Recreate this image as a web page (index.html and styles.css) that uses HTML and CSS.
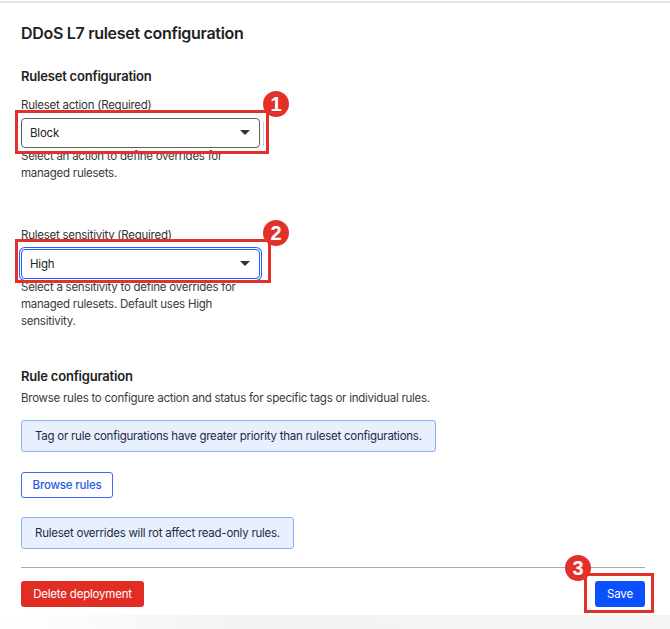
FILE: index.html
```html
<!DOCTYPE html>
<html lang="en">

<head>
    <meta charset="UTF-8" />
    <meta name="viewport" content="width=device-width, initial-scale=1" />
    <title>DDoS L7 ruleset configuration</title>
    <link rel="stylesheet" href="styles.css">
</head>

<body>
    <div class="panel">
        <h1 class="title">DDoS L7 ruleset configuration</h1>

        <h2 class="section-title">Ruleset configuration</h2>

        <div class="field">
            <label class="field-label">Ruleset action (Required)</label>
            <div class="select-wrap">
                <div class="select">
                    <span>Block</span>
                    <svg class="caret" width="10" height="6" viewBox="0 0 10 6"><path d="M0 0h10L5 5z" /></svg>
                </div>
                <span class="scroll-hint"></span>
                <span class="mark mark-1"></span>
                <span class="badge badge-1">1</span>
            </div>
            <p class="help">Select an action to define overrides for<br>managed rulesets.</p>
        </div>

        <div class="field field-second">
            <label class="field-label">Ruleset sensitivity (Required)</label>
            <div class="select-wrap">
                <div class="select is-focused">
                    <span>High</span>
                    <svg class="caret" width="10" height="6" viewBox="0 0 10 6"><path d="M0 0h10L5 5z" /></svg>
                </div>
                <span class="mark mark-2"></span>
                <span class="badge badge-2">2</span>
            </div>
            <p class="help">Select a sensitivity to define overrides for<br>managed rulesets. Default uses High<br>sensitivity.</p>
        </div>

        <h2 class="section-title rule-title">Rule configuration</h2>
        <p class="desc">Browse rules to configure action and status for specific tags or individual rules.</p>

        <div class="notice">Tag or rule configurations have greater priority than ruleset configurations.</div>

        <button class="btn btn-outline">Browse rules</button>

        <div class="notice">Ruleset overrides will rot affect read-only rules.</div>

        <div class="footer">
            <button class="btn btn-danger">Delete deployment</button>
            <div class="save-wrap">
                <button class="btn btn-primary">Save</button>
                <span class="mark mark-3"></span>
                <span class="badge badge-3">3</span>
            </div>
        </div>
    </div>
    <div class="bottom-fade"></div>
</body>

</html>
```

FILE: styles.css
```css
html,
body {
    margin: 0;
    background: #fff;
}

body {
    font-family: Inter, "Noto Sans", sans-serif;
    color: #2b2b2b;
    padding-top: 1px;
}

.panel {
    border-top: 2px solid #e4e4e4;
    padding: 0 25px 8px 21px;
}

.title {
    font-size: 16px;
    line-height: 24px;
    font-weight: 600;
    letter-spacing: -0.3px;
    margin: 18px 0 0;
    color: #222;
}

.section-title {
    font-size: 13px;
    line-height: 20px;
    font-weight: 600;
    letter-spacing: -0.2px;
    margin: 21px 0 0;
    color: #222;
}

.field {
    margin-top: 11px;
    width: 240px;
}

.field-second {
    margin-top: 45px;
}

.field-label {
    display: block;
    font-size: 11.5px;
    letter-spacing: -0.25px;
    line-height: 16px;
    color: #333;
    margin-bottom: 5px;
}

.field-second .field-label {
    margin-bottom: 6px;
}

/* dropdown */
.select-wrap {
    position: relative;
    width: 239px;
}

.select {
    box-sizing: border-box;
    height: 30px;
    border: 1px solid #5f5f5f;
    border-radius: 4px;
    display: flex;
    align-items: center;
    justify-content: space-between;
    padding: 0 9px 0 8px;
    font-size: 11.5px;
    letter-spacing: -0.2px;
    color: #222;
    background: #fff;
}

.select.is-focused {
    border-color: #1f5cff;
    box-shadow: 0 0 0 1px #fff, 0 0 0 2px #1f5cff;
}

.caret {
    fill: #333;
}

.scroll-hint {
    position: absolute;
    left: 242px;
    top: 3px;
    width: 1px;
    height: 25px;
    background: #c9d3e6;
}

.help {
    margin: 0;
    font-size: 11.5px;
    letter-spacing: -0.25px;
    line-height: 17px;
    color: #3a3a3a;
}

.rule-title {
    margin-top: 36px;
}

.desc {
    margin: 4px 0 0;
    font-size: 11.5px;
    letter-spacing: -0.25px;
    line-height: 16px;
    color: #3a3a3a;
}

/* info boxes */
.notice {
    display: inline-block;
    box-sizing: border-box;
    margin-top: 14px;
    padding: 7px 13px;
    background: #e8f0fd;
    border: 1px solid #8cb0f3;
    border-radius: 3px;
    font-size: 11.5px;
    letter-spacing: -0.25px;
    line-height: 16px;
    color: #1d2a47;
}

.btn {
    font-family: inherit;
    font-size: 11.5px;
    letter-spacing: -0.2px;
    line-height: 16px;
    border-radius: 3px;
    cursor: pointer;
    height: 26px;
    padding: 0 12px;
    white-space: nowrap;
}

.btn-outline {
    display: block;
    width: 92px;
    padding: 0;
    margin: 20px 0 19px;
    background: #fff;
    color: #1f5ae8;
    border: 1px solid #3a6cf0;
    font-weight: 500;
}

.notice + .btn-outline + .notice {
    margin-top: 0;
}

.footer {
    margin-top: 18px;
    border-top: 1px solid #a9a9a9;
    padding-top: 13px;
    display: flex;
    justify-content: space-between;
    align-items: flex-start;
}

.btn-danger {
    background: #e22d25;
    color: #fff;
    border: none;
    width: 123px;
    padding: 0;
}

.btn-primary {
    background: #0b50ff;
    color: #fff;
    border: none;
    width: 50px;
    padding: 0;
}

.save-wrap {
    position: relative;
}

/* red callouts */
.mark {
    position: absolute;
    border: 3px solid #e3302b;
    pointer-events: none;
}

.mark-1 {
    left: -6px;
    top: -8px;
    right: -9px;
    bottom: -6px;
}

.mark-2 {
    left: -6px;
    top: -10px;
    right: -11px;
    bottom: -4px;
}

.mark-3 {
    left: -11px;
    top: -8px;
    right: -9px;
    bottom: -6px;
}

.badge {
    position: absolute;
    width: 26px;
    height: 26px;
    border-radius: 50%;
    background: #e3302b;
    color: #fff;
    font-family: "Liberation Sans", Arial, sans-serif;
    font-weight: 700;
    font-size: 20px;
    line-height: 26px;
    text-align: center;
}

.badge-1 {
    left: 242px;
    top: -27px;
}

.badge-2 {
    left: 242px;
    top: -29px;
}

.badge-3 {
    left: -30px;
    top: -26px;
}

.bottom-fade {
    height: 14px;
    background: linear-gradient(90deg, #fff 0, #f3f3f3 35%, #f5f5f5 100%);
}
```
